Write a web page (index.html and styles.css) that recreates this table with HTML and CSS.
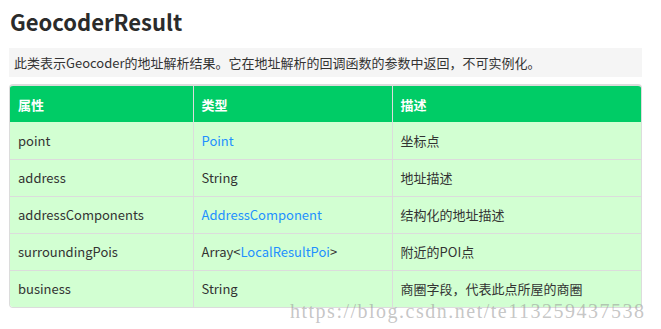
FILE: index.html
```html
<!DOCTYPE html>
<html lang="zh">
<head>
<meta charset="utf-8">
<title>GeocoderResult</title>
<link rel="stylesheet" href="styles.css">
</head>
<body>
<div class="page">
  <h1 class="title">GeocoderResult</h1>
  <p class="desc">此类表示Geocoder的地址解析结果。它在地址解析的回调函数的参数中返回，不可实例化。</p>
  <div class="table-wrap">
    <table class="props">
      <thead>
        <tr><th class="c1">属性</th><th class="c2">类型</th><th class="c3">描述</th></tr>
      </thead>
      <tbody>
        <tr><td>point</td><td><a class="link">Point</a></td><td>坐标点</td></tr>
        <tr><td>address</td><td>String</td><td>地址描述</td></tr>
        <tr><td>addressComponents</td><td><a class="link">AddressComponent</a></td><td>结构化的地址描述</td></tr>
        <tr><td>surroundingPois</td><td>Array&lt;<a class="link">LocalResultPoi</a>&gt;</td><td>附近的POI点</td></tr>
        <tr><td>business</td><td>String</td><td>商圈字段，代表此点所屋的商圈</td></tr>
      </tbody>
    </table>
  </div>
  <div class="watermark">https://blog.csdn.net/te113259437538</div>
</div>
</body>
</html>
```

FILE: styles.css
```css
html, body {
  margin: 0;
  padding: 0;
  background: #fff;
}
.page {
  position: relative;
  width: 633px;
  min-height: 329px;
  padding: 0 0 0 9px;
  font-family: "Noto Sans CJK SC", "Noto Sans", sans-serif;
  color: #333;
}
.title {
  margin: 0;
  padding: 6px 0 0 1px;
  height: 48px;
  box-sizing: border-box;
  font-size: 22px;
  line-height: 30px;
  font-weight: 700;
  color: #2b2b2b;
}
.desc {
  margin: 0;
  height: 29px;
  line-height: 29px;
  padding: 0 0 0 5px;
  background: #f5f5f5;
  font-size: 13px;
  color: #333;
}
.table-wrap {
  margin-top: 7px;
  border: 1px solid #dcdcdc;
  border-top: 2px solid #dcdcdc;
  border-radius: 4px;
  overflow: hidden;
  width: 631px;
}
.props {
  border-collapse: collapse;
  width: 100%;
  font-size: 13px;
  table-layout: fixed;
}
.props th {
  background: #00cc66;
  color: #fff;
  font-weight: 700;
  text-align: left;
  height: 36px;
  padding: 0 0 0 8px;
  box-sizing: border-box;
  border-left: 1px solid #dcdcdc;
}
.props th.c1 { width: 183px; border-left: none; }
.props th.c2 { width: 199px; }
.props td {
  background: #d2ffd2;
  height: 37px;
  padding: 0 0 0 8px;
  box-sizing: border-box;
  border-left: 1px solid #dcdcdc;
  border-top: 1px solid #dcdcdc;
}
.props td:first-child { border-left: none; }
.props tbody tr:first-child td { border-top: none; height: 37px; }
.link {
  color: #1e90ff;
  text-decoration: none;
}
.watermark {
  position: absolute;
  left: 290px;
  top: 299px;
  font-family: "Liberation Serif", serif;
  font-size: 20px;
  line-height: 24px;
  letter-spacing: 1.5px;
  color: rgba(150, 150, 150, 0.55);
  white-space: nowrap;
}
```
